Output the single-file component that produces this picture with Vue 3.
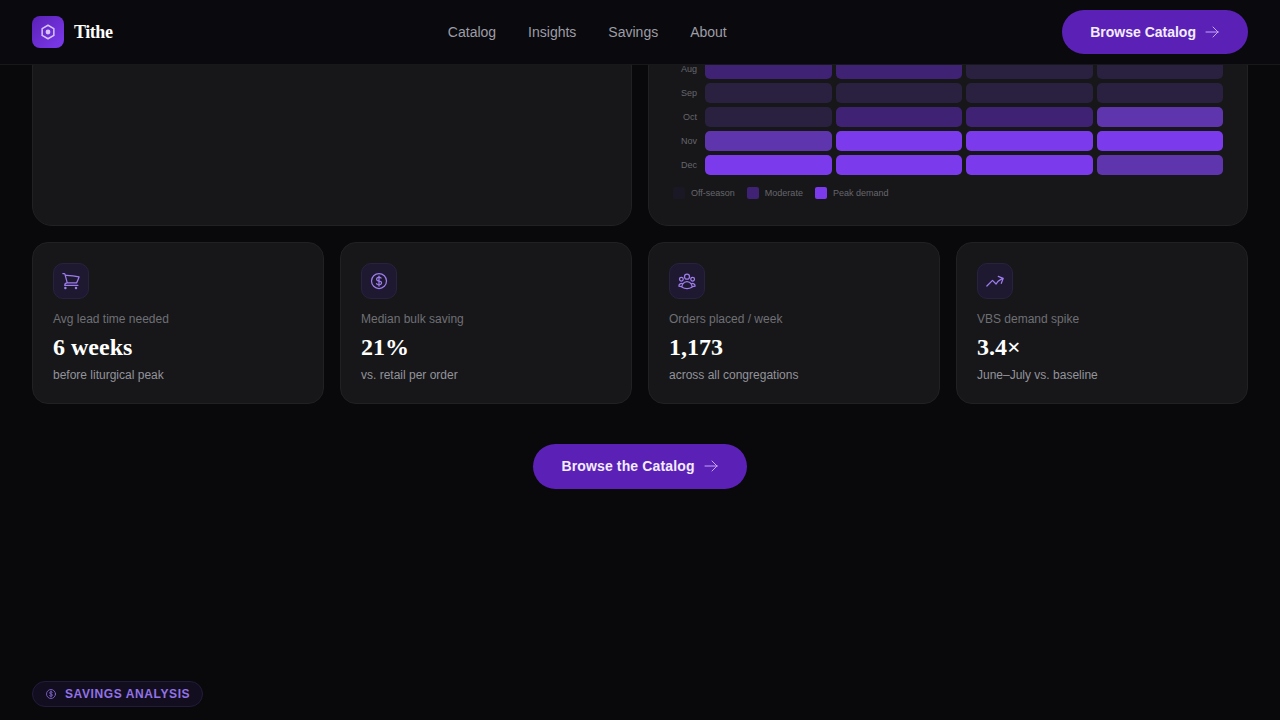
<template>
  <div class="page">
    <header class="nav">
      <div class="brand">
        <span class="logo">
          <svg width="18" height="18" viewBox="0 0 24 24" fill="none" stroke="currentColor" stroke-width="2" stroke-linecap="round" stroke-linejoin="round">
            <path d="M12 3l7.800 4.500v9L12 21l-7.800-4.500v-9z" />
            <circle cx="12" cy="12" r="2.200" fill="currentColor" />
          </svg>
        </span>
        <span class="brand-name">Tithe</span>
      </div>
      <nav class="links">
        <a v-for="l in links" :key="l">{{ l }}</a>
      </nav>
      <button class="btn">
        Browse Catalog
        <svg class="arrow" width="16" height="16" viewBox="0 0 24 24" fill="none" stroke="currentColor" stroke-width="1.500" stroke-linecap="round" stroke-linejoin="round">
          <path :d="arrowPath" />
        </svg>
      </button>
    </header>

    <main class="main">
      <section class="top">
        <div class="card"></div>
        <div class="card chart">
          <div v-for="row in rows" :key="row.month" class="row">
            <span class="month">{{ row.month }}</span>
            <div class="cells">
              <span v-for="(v, i) in row.cells" :key="i" class="cell" :class="'lv' + v"></span>
            </div>
          </div>
          <div class="legend">
            <span v-for="item in legend" :key="item.label" class="legend-item">
              <i class="swatch" :class="item.cls"></i>{{ item.label }}
            </span>
          </div>
        </div>
      </section>

      <section class="stats">
        <div v-for="s in stats" :key="s.label" class="stat">
          <span class="icon">
            <svg width="20" height="20" viewBox="0 0 24 24" fill="none" stroke="currentColor" stroke-width="1.500" stroke-linecap="round" stroke-linejoin="round">
              <path :d="s.icon" />
            </svg>
          </span>
          <p class="label">{{ s.label }}</p>
          <p class="value">{{ s.value }}</p>
          <p class="sub">{{ s.sub }}</p>
        </div>
      </section>

      <div class="cta">
        <button class="btn btn-lg">
          Browse the Catalog
          <svg class="arrow" width="16" height="16" viewBox="0 0 24 24" fill="none" stroke="currentColor" stroke-width="1.500" stroke-linecap="round" stroke-linejoin="round">
            <path :d="arrowPath" />
          </svg>
        </button>
      </div>

      <section class="savings">
        <span class="badge">
          <svg width="12" height="12" viewBox="0 0 24 24" fill="none" stroke="currentColor" stroke-width="1.500" stroke-linecap="round" stroke-linejoin="round">
            <path :d="dollarPath" />
          </svg>
          Savings Analysis
        </span>
      </section>
    </main>
  </div>
</template>

<script setup>
const links = ['Catalog', 'Insights', 'Savings', 'About']

const arrowPath = 'M13.500 4.500 21 12m0 0-7.500 7.500M21 12H3'
const dollarPath = 'M12 6v12m-3-2.818.879.659c1.171.879 3.070.879 4.242 0 1.172-.879 1.172-2.303 0-3.182C13.536 12.219 12.768 12 12 12c-.725 0-1.450-.22-2.003-.659-1.106-.879-1.106-2.303 0-3.182s2.900-.879 4.006 0l.415.330M21 12a9 9 0 1 1-18 0 9 9 0 0 1 18 0Z'

const rows = [
  { month: 'Jul', cells: [1, 1, 1, 1] },
  { month: 'Aug', cells: [2, 2, 1, 1] },
  { month: 'Sep', cells: [1, 1, 1, 1] },
  { month: 'Oct', cells: [1, 2, 2, 3] },
  { month: 'Nov', cells: [3, 4, 4, 4] },
  { month: 'Dec', cells: [4, 4, 4, 3] },
]

const legend = [
  { label: 'Off-season', cls: 'sw-off' },
  { label: 'Moderate', cls: 'sw-mod' },
  { label: 'Peak demand', cls: 'sw-peak' },
]

const stats = [
  {
    label: 'Avg lead time needed',
    value: '6 weeks',
    sub: 'before liturgical peak',
    icon: 'M2.250 3h1.386c.51 0 .955.343 1.087.835l.383 1.437M7.500 14.250a3 3 0 0 0-3 3h15.750m-12.750-3h11.218c1.121-2.300 2.100-4.684 2.924-7.138a60.114 60.114 0 0 0-16.536-1.840M7.500 14.250 5.106 5.272M6 20.250a.75.75 0 1 1-1.500 0 .75.75 0 0 1 1.500 0Zm12.750 0a.75.75 0 1 1-1.500 0 .75.75 0 0 1 1.500 0Z',
  },
  {
    label: 'Median bulk saving',
    value: '21%',
    sub: 'vs. retail per order',
    icon: dollarPath,
  },
  {
    label: 'Orders placed / week',
    value: '1,173',
    sub: 'across all congregations',
    icon: 'M18 18.720a9.094 9.094 0 0 0 3.741-.479 3 3 0 0 0-4.682-2.720m.94 3.198.001.031c0 .225-.012.447-.037.666A11.944 11.944 0 0 1 12 21c-2.170 0-4.207-.576-5.963-1.584A6.062 6.062 0 0 1 6 18.719m12 0a5.971 5.971 0 0 0-.941-3.197m0 0A5.995 5.995 0 0 0 12 12.750a5.995 5.995 0 0 0-5.058 2.772m0 0a3 3 0 0 0-4.681 2.720 8.986 8.986 0 0 0 3.740.477m.94-3.197a5.971 5.971 0 0 0-.94 3.197M15 6.750a3 3 0 1 1-6 0 3 3 0 0 1 6 0Zm6 3a2.250 2.250 0 1 1-4.500 0 2.250 2.250 0 0 1 4.500 0Zm-13.500 0a2.250 2.250 0 1 1-4.500 0 2.250 2.250 0 0 1 4.500 0Z',
  },
  {
    label: 'VBS demand spike',
    value: '3.4×',
    sub: 'June–July vs. baseline',
    icon: 'M2.250 18 9 11.250l4.306 4.306a11.950 11.950 0 0 1 5.814-5.518l2.740-1.220m0 0-5.940-2.281m5.939 2.280-2.280 5.941',
  },
]
</script>

<style>
html,
body {
  margin: 0;
  height: 720px;
  overflow: hidden;
  background: #09090c;
}
</style>

<style scoped>
.page {
  height: 720px;
  overflow: hidden;
  background: #09090c;
  color: #fff;
  font-family: "Liberation Sans", Arial, sans-serif;
}

.nav {
  position: fixed;
  top: 0;
  left: 0;
  right: 0;
  z-index: 10;
  height: 64px;
  padding: 0 32px;
  display: flex;
  align-items: center;
  justify-content: space-between;
  background: #0a0a0e;
  border-bottom: 1px solid #18181c;
}

.brand {
  display: flex;
  align-items: center;
  gap: 10px;
}

.logo {
  width: 32px;
  height: 32px;
  border-radius: 8px;
  background: linear-gradient(135deg, #5b21b6, #7c3aed);
  color: #d8c4fb;
  display: flex;
  align-items: center;
  justify-content: center;
}

.brand-name {
  font-family: "Liberation Serif", "Times New Roman", serif;
  font-weight: 700;
  font-size: 18px;
  letter-spacing: -0.025em;
}

.links {
  display: flex;
  gap: 32px;
  font-size: 14px;
  color: #9d9da6;
}

.btn {
  height: 44px;
  padding: 0 28px;
  border: 0;
  border-radius: 999px;
  background: #5b21b6;
  color: #f3ecff;
  font-family: inherit;
  font-size: 14px;
  font-weight: 700;
  display: flex;
  align-items: center;
  gap: 8px;
}

.btn-lg {
  height: 45px;
  padding-bottom: 1px;
  letter-spacing: 0.01em;
}

.arrow {
  color: #c4a7f8;
}

.main {
  padding: 10px 32px 0;
}

.top {
  display: grid;
  grid-template-columns: 1fr 1fr;
  gap: 16px;
}

.card {
  background: #171719;
  border: 1px solid #212124;
  border-radius: 20px;
}

.chart {
  padding: 24px 24px 26px;
}

.row {
  display: grid;
  grid-template-columns: 24px 1fr;
  gap: 8px;
  margin-bottom: 4px;
  align-items: center;
}

.month {
  font-size: 9px;
  color: #66666d;
  text-align: right;
}

.cells {
  display: grid;
  grid-template-columns: repeat(4, 1fr);
  gap: 4px;
}

.cell {
  height: 20px;
  border-radius: 5px;
}

.lv1 {
  background: #2a2040;
}

.lv2 {
  background: #3f2274;
}

.lv3 {
  background: #5f35ad;
}

.lv4 {
  background: #7c3aed;
}

.legend {
  display: flex;
  gap: 12px;
  margin-top: 12px;
  font-size: 9px;
  color: #66666d;
}

.legend-item {
  display: flex;
  align-items: center;
  gap: 6px;
}

.swatch {
  width: 12px;
  height: 12px;
  border-radius: 2px;
}

.sw-off {
  background: #1a1825;
}

.sw-mod {
  background: #3f2274;
}

.sw-peak {
  background: #7c3aed;
}

.stats {
  display: grid;
  grid-template-columns: repeat(4, 1fr);
  gap: 16px;
  margin-top: 16px;
}

.stat {
  background: #171719;
  border: 1px solid #212124;
  border-radius: 16px;
  padding: 20px;
}

.icon {
  width: 36px;
  height: 36px;
  border-radius: 10px;
  background: #1e1930;
  border: 1px solid #282140;
  box-sizing: border-box;
  color: #9d7cec;
  display: flex;
  align-items: center;
  justify-content: center;
}

.label {
  margin: 12px 0 0;
  font-size: 12px;
  line-height: 16px;
  color: #6f6f76;
}

.value {
  margin: 4px 0 0;
  font-family: "Liberation Serif", "Times New Roman", serif;
  font-size: 24px;
  font-weight: 700;
  line-height: 32px;
  color: #fff;
}

.sub {
  margin: 4px 0 0;
  font-size: 12px;
  line-height: 16px;
  color: #93939b;
}

.cta {
  display: flex;
  justify-content: center;
  margin-top: 40px;
}

.savings {
  margin-top: 192px;
}

.badge {
  display: inline-flex;
  align-items: center;
  gap: 8px;
  height: 26px;
  padding: 0 12px;
  box-sizing: border-box;
  border: 1px solid #231b3b;
  border-radius: 999px;
  background: #120e20;
  color: #9272e6;
  font-size: 12px;
  font-weight: 700;
  letter-spacing: 0.05em;
  text-transform: uppercase;
}
</style>
